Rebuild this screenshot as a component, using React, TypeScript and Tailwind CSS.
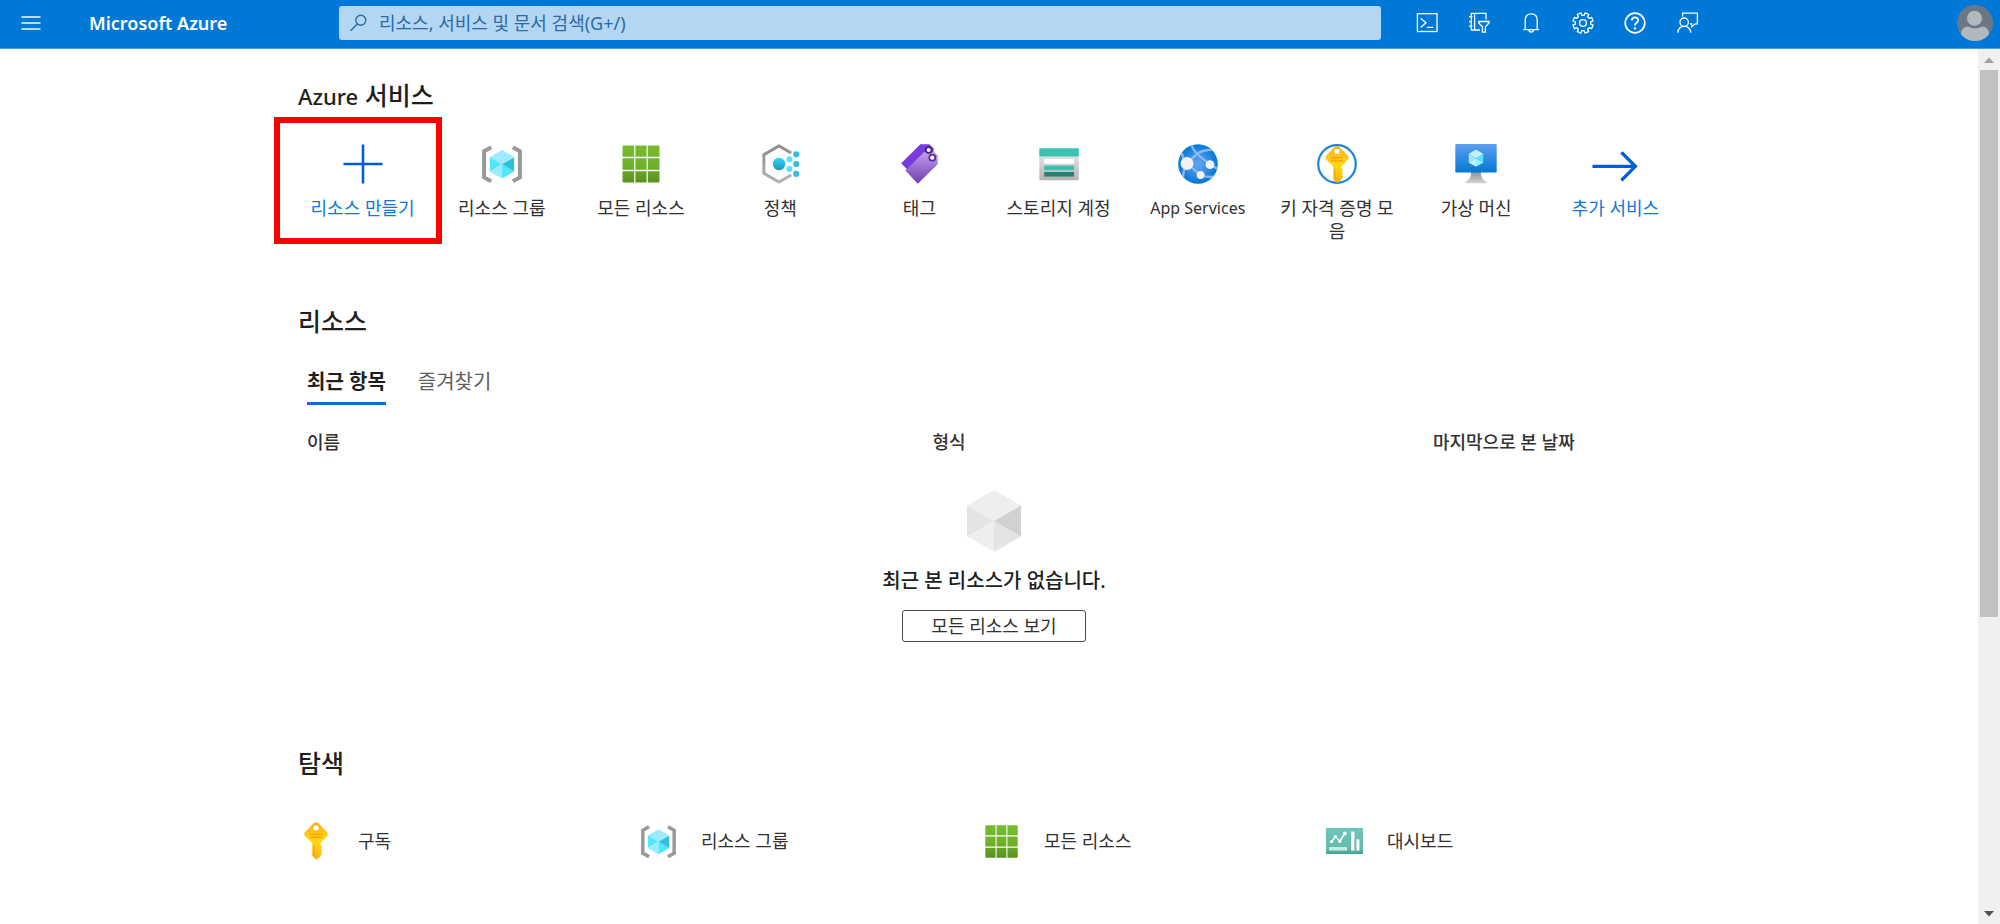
import type { ReactNode } from "react";

const CUBE_BLUE = ["#9cebff", "#50e6ff", "#9cebff", "#50e6ff", "#32bedd"];
const CUBE_GRAY = ["#eeeeee", "#e4e4e4", "#eeeeee", "#e4e4e4", "#d1d1d1"];

// faces: top, left, bottom left, bottom right, right
const CubeFaces = ({ colors }: { colors: string[] }) => (
	<>
		<path d="M27 0 54 15.5 27 31 0 15.5Z" fill={colors[0]} />
		<path d="M0 15.5 27 31 0 46.5Z" fill={colors[1]} />
		<path d="M0 46.5 27 31V62Z" fill={colors[2]} />
		<path d="M27 62V31L54 46.5Z" fill={colors[3]} />
		<path d="M54 46.5 27 31 54 15.5Z" fill={colors[4]} />
	</>
);

const KeyShape = ({ id }: { id: string }) => (
	<>
		<defs>
			<linearGradient id={id} x1="0" y1="0" x2="0" y2="1">
				<stop offset="0" stopColor="#feaa15" />
				<stop offset="0.3" stopColor="#ffc81a" />
				<stop offset="0.5" stopColor="#ffd70f" />
				<stop offset="1" stopColor="#feb014" />
			</linearGradient>
		</defs>
		<path
			d="M10.2.8Q12-.4 13.8.8L22.9 9.9Q24.7 12 23 14.2L16.6 20.8V23.4L18.2 25 16.8 26.6 18.2 28.2 16.8 29.8 18.2 31.4 16.6 33.2V34.2L12.4 37.8 8.2 34V21L1.1 14.2Q-.7 12 1.1 9.9Z"
			fill={`url(#${id})`}
		/>
		<path d="M10 24V34.5" stroke="#ff9300" strokeWidth="1.4" opacity="0.6" />
		<circle cx="12" cy="5.8" r="2.6" fill="#fff" />
		<path d="M6.4 12.3H17.6M6.4 15.2H17.6" stroke="#ff9300" strokeWidth="1.5" opacity="0.75" strokeLinecap="round" />
	</>
);

const PlusIcon = () => (
	<svg viewBox="0 0 40 40" className="h-10 w-10" aria-hidden="true">
		<path d="M20 .5V39.5M.5 20H39.5" stroke="#015cda" strokeWidth="2.6" />
	</svg>
);

const ResourceGroupIcon = ({ className }: { className: string }) => (
	<svg viewBox="0 0 40 40" className={className} aria-hidden="true">
		<path d="M9.2 3.2 2.1 7.2V33.4L9.2 37.3M30.8 3.2 37.9 7.2V33.4L30.8 37.3" fill="none" stroke="#999" strokeWidth="4" />
		<svg x="7.6" y="6" width="24.8" height="28.6" viewBox="0 0 54 62">
			<CubeFaces colors={CUBE_BLUE} />
		</svg>
	</svg>
);

const GridIcon = ({ id, className }: { id: string; className: string }) => (
	<svg viewBox="0 0 40 40" className={className} aria-hidden="true">
		<defs>
			<linearGradient id={id} gradientUnits="userSpaceOnUse" x1="0" y1="1.5" x2="0" y2="38.5">
				<stop offset="0" stopColor="#76bc2d" />
				<stop offset="0.55" stopColor="#6fb12a" />
				<stop offset="1" stopColor="#5a9020" />
			</linearGradient>
		</defs>
		<path
			d="M2.3 1.5H13.2V12.8H1.5V2.3ZM14.4 1.5H25.6V12.8H14.4ZM26.8 1.5H37.7L38.5 2.3V12.8H26.8ZM1.5 14.2H13.2V25.8H1.5ZM14.4 14.2H25.6V25.8H14.4ZM26.8 14.2H38.5V25.8H26.8ZM1.5 27.2H13.2V38.5H2.3L1.5 37.7ZM14.4 27.2H25.6V38.5H14.4ZM26.8 27.2H38.5V37.7L37.7 38.5H26.8Z"
			fill={`url(#${id})`}
		/>
	</svg>
);

const PolicyIcon = () => (
	<svg viewBox="0 0 40 40" className="h-10 w-10" aria-hidden="true">
		<defs>
			<linearGradient id="policy-dot" x1="0" y1="0" x2="0" y2="1">
				<stop offset="0" stopColor="#32d4f5" />
				<stop offset="1" stopColor="#1f95bf" />
			</linearGradient>
			<linearGradient id="policy-hex" x1="0" y1="0" x2="0" y2="1">
				<stop offset="0" stopColor="#8c8c8c" />
				<stop offset="1" stopColor="#b3b3b3" />
			</linearGradient>
		</defs>
		<path d="M31.2 9 19 2 3.9 10.6V29.4L19 38 31.2 31" fill="none" stroke="url(#policy-hex)" strokeWidth="3" />
		<circle cx="19" cy="20" r="6.2" fill="url(#policy-dot)" />
		<g fill="#50e6ff">
			<circle cx="29.4" cy="15.3" r="3" />
			<circle cx="29.4" cy="24.9" r="3" />
		</g>
		<g fill="#32bedd">
			<circle cx="36.3" cy="10.3" r="3.1" />
			<circle cx="36.3" cy="20" r="3.1" />
			<circle cx="36.3" cy="29.8" r="3.1" />
		</g>
	</svg>
);

const TagIcon = () => (
	<svg viewBox="0 0 40 40" className="h-10 w-10" aria-hidden="true">
		<defs>
			<linearGradient id="tag-front" x1="0" y1="0" x2="0" y2="1">
				<stop offset="0" stopColor="#c49dec" />
				<stop offset="1" stopColor="#6b3fb0" />
			</linearGradient>
		</defs>
		<path d="M2.2 19.3 21.4.3H30.4L34.6 4.5V10L8.5 25.8Z" fill="#773adc" />
		<path d="M6.3 26.6 25.2 8 34.6 7.6 38.6 11.6V20.2L18.8 39.8Z" fill="url(#tag-front)" />
		<circle cx="29.7" cy="6" r="2.9" fill="#fff" stroke="#3f1f80" strokeWidth="1.7" />
		<circle cx="33.3" cy="13.7" r="3" fill="#fff" stroke="#552f99" strokeWidth="1.7" />
	</svg>
);

const StorageIcon = () => (
	<svg viewBox="0 0 40 40" className="h-10 w-10" aria-hidden="true">
		<defs>
			<linearGradient id="storage-body" x1="0" y1="0" x2="0" y2="1">
				<stop offset="0" stopColor="#e0e0e0" />
				<stop offset="1" stopColor="#b3b3b3" />
			</linearGradient>
		</defs>
		<path d="M.3 12.5H39.8V35Q39.8 36.2 38.6 36.2H1.5Q.3 36.2 .3 35Z" fill="url(#storage-body)" />
		<path d="M1.3 4.3H38.8Q39.8 4.3 39.8 5.3V12.6H.3V5.3Q.3 4.3 1.3 4.3Z" fill="#37c2b1" />
		<rect x="5.2" y="15" width="29.8" height="4.8" fill="#fff" />
		<rect x="5.2" y="21.6" width="29.8" height="4.6" fill="#37c2b1" />
		<rect x="5.2" y="28" width="29.8" height="4.6" fill="#258277" />
	</svg>
);

const AppServicesIcon = () => (
	<svg viewBox="0 0 40 40" className="h-10 w-10" aria-hidden="true">
		<defs>
			<radialGradient id="app-globe">
				<stop offset="0.1" stopColor="#5ea0ef" />
				<stop offset="0.6" stopColor="#2f8ce2" />
				<stop offset="1" stopColor="#0078d4" />
			</radialGradient>
			<clipPath id="app-clip">
				<circle cx="20" cy="20" r="19.8" />
			</clipPath>
		</defs>
		<circle cx="20" cy="20" r="19.8" fill="url(#app-globe)" />
		<g clipPath="url(#app-clip)" fill="none" stroke="#86b9f5" strokeWidth="2.4">
			<path d="M13 0Q15 6 19 9.8L32 20.7M19 9.8Q26 5.5 35 5.8M19 9.8 9 19.3 22.5 31M9 19.3Q5 27 5 34M9 19.3Q4 14 4 9M22.5 31Q31 34.5 40 32M32 20.7Q37 24 40 24" />
		</g>
		<g fill="#f2f2f2">
			<circle cx="9" cy="19.5" r="6.5" />
			<circle cx="32" cy="20.7" r="4.4" />
			<circle cx="22.6" cy="31" r="3.9" />
		</g>
	</svg>
);

const KeyVaultIcon = () => (
	<svg viewBox="0 0 40 40" className="h-10 w-10" aria-hidden="true">
		<circle cx="20" cy="20" r="18.8" fill="#fff" stroke="#1b85dc" strokeWidth="2.2" />
		<svg x="8" y="1.6" width="24" height="37.6" viewBox="0 0 24 38">
			<KeyShape id="vault-key" />
		</svg>
	</svg>
);

const VirtualMachineIcon = () => (
	<svg viewBox="0 0 42 40" className="h-10 w-[42px]" aria-hidden="true">
		<defs>
			<linearGradient id="vm-screen" x1="0" y1="0" x2="0" y2="1">
				<stop offset="0" stopColor="#5ea0ef" />
				<stop offset="1" stopColor="#0078d4" />
			</linearGradient>
			<linearGradient id="vm-stand" x1="0" y1="0" x2="0" y2="1">
				<stop offset="0" stopColor="#8a8a8a" />
				<stop offset="1" stopColor="#d4d4d4" />
			</linearGradient>
		</defs>
		<path d="M16.2 27H25.8Q25.6 36 31.2 37.4V39.2H10.8V37.4Q16.4 36 16.2 27Z" fill="url(#vm-stand)" />
		<rect x="0.3" y="0" width="41.4" height="28.6" rx="1.2" fill="url(#vm-screen)" />
		<svg x="13.5" y="5.6" width="15" height="17.2" viewBox="0 0 54 62">
			<CubeFaces colors={["#c3f1ff", "#9cebff", "#c3f1ff", "#9cebff", "#50e6ff"]} />
		</svg>
	</svg>
);

const ArrowIcon = () => (
	<svg viewBox="0 0 46 40" className="h-10 w-[46px]" aria-hidden="true">
		<path d="M.5 22.3H43.5M29.4 8.3 43.4 22.3 29.4 36.3" fill="none" stroke="#015cda" strokeWidth="3.3" />
	</svg>
);

const DashboardIcon = () => (
	<svg viewBox="0 0 37 26" className="h-[26px] w-[37px]" aria-hidden="true">
		<defs>
			<linearGradient id="dash-bg" x1="0" y1="0" x2="0" y2="1">
				<stop offset="0" stopColor="#6bc7b8" />
				<stop offset="0.8" stopColor="#62bbad" />
				<stop offset="1" stopColor="#45a092" />
			</linearGradient>
		</defs>
		<rect width="37" height="26" rx="0.8" fill="url(#dash-bg)" />
		<path d="M5.6 13.6 9.5 8.6 13.8 13.2 18.8 5.6" fill="none" stroke="#fff" strokeWidth="1.5" />
		<g fill="#fff">
			<circle cx="5.6" cy="13.6" r="1.7" />
			<circle cx="9.5" cy="8.6" r="1.7" />
			<circle cx="13.8" cy="13.2" r="1.7" />
			<circle cx="18.8" cy="5.4" r="1.9" />
			<rect x="25.2" y="3.6" width="3.2" height="19" />
			<rect x="30.4" y="11.3" width="3" height="11.3" />
		</g>
		<rect x="3" y="19" width="18" height="3.6" fill="#c4ebe5" />
	</svg>
);

const HeaderIcon = ({ children }: { children: ReactNode }) => (
	<svg viewBox="0 0 24 24" className="h-6 w-6" fill="none" stroke="#fff" strokeWidth="1.3" aria-hidden="true">
		{children}
	</svg>
);

// Eight-tooth gear outline centred on 12,12
const gearPath = (() => {
	const points: string[] = [];
	for (let tooth = 0; tooth < 8; tooth++) {
		const mid = tooth * 45 - 67.5;
		for (const [offset, radius] of [
			[-14, 7.8],
			[-11, 10.3],
			[11, 10.3],
			[14, 7.8],
		]) {
			const angle = ((mid + offset) * Math.PI) / 180;
			points.push(`${(12 + radius * Math.cos(angle)).toFixed(2)} ${(12 + radius * Math.sin(angle)).toFixed(2)}`);
		}
	}
	return `M${points.join("L")}Z`;
})();

const headerActions = [
	{
		label: "Cloud Shell",
		icon: (
			<>
				<rect x="2.4" y="2.7" width="19.6" height="17.8" />
				<path d="M5.6 7.2 11 11.8 5.6 16.4M12 16.4H18.2" />
			</>
		),
	},
	{
		label: "디렉터리 + 구독",
		icon: (
			<>
				<path d="M13 19H4.3V2.3H19V8.4M7.6 2.3V19M2 5.6H5.5M2 10.6H4.3M2 15.2H5.5" />
				<path d="M11.8 10.5H22V12L18.4 15.8V21.2H15.4V15.8L11.8 12Z" />
			</>
		),
	},
	{
		label: "알림",
		icon: (
			<>
				<path d="M6.2 18.6V9.2Q6.2 2.9 12.2 2.9 18.2 2.9 18.2 9.2V18.6M4.4 18.6H20" />
				<path d="M10 18.8Q10 21.2 12.2 21.2 14.4 21.2 14.4 18.8" />
			</>
		),
	},
	{
		label: "설정",
		icon: (
			<>
				<path d={gearPath} strokeLinejoin="round" />
				<circle cx="12" cy="12" r="3.4" />
			</>
		),
	},
	{
		label: "도움말",
		icon: (
			<>
				<circle cx="12" cy="12" r="9.8" strokeWidth="1.7" />
				<path d="M8.8 9.4Q8.9 6.4 12 6.4 15.2 6.4 15.2 9.2 15.2 10.6 13.6 11.7 12 12.8 12 14.6" strokeWidth="1.8" />
				<circle cx="12" cy="17.4" r="1.2" fill="#fff" stroke="none" />
			</>
		),
	},
	{
		label: "피드백",
		icon: (
			<>
				<circle cx="9.2" cy="11.2" r="4.2" />
				<path d="M2.8 21.6Q3.4 15.4 9.2 15.4T15.8 21.6M7.6 5.6V2.2H22.4V12.8H20.4L16.8 15.6V12.8H15" />
			</>
		),
	},
];

const services = [
	{ name: "리소스 만들기", icon: <PlusIcon />, accent: true, highlighted: true },
	{ name: "리소스 그룹", icon: <ResourceGroupIcon className="h-10 w-10" /> },
	{ name: "모든 리소스", icon: <GridIcon id="grid-service" className="h-10 w-10" /> },
	{ name: "정책", icon: <PolicyIcon /> },
	{ name: "태그", icon: <TagIcon /> },
	{ name: "스토리지 계정", icon: <StorageIcon /> },
	{ name: "App Services", icon: <AppServicesIcon />, latin: true },
	{ name: "키 자격 증명 모음", icon: <KeyVaultIcon /> },
	{ name: "가상 머신", icon: <VirtualMachineIcon /> },
	{ name: "추가 서비스", icon: <ArrowIcon />, accent: true },
];

const navigateLinks = [
	{
		name: "구독",
		icon: (
			<svg viewBox="0 0 24 38" className="h-[38px] w-6" aria-hidden="true">
				<KeyShape id="subscription-key" />
			</svg>
		),
	},
	{ name: "리소스 그룹", icon: <ResourceGroupIcon className="h-[35px] w-[35px]" /> },
	{ name: "모든 리소스", icon: <GridIcon id="grid-navigate" className="h-[35px] w-[35px]" /> },
	{ name: "대시보드", icon: <DashboardIcon /> },
];

const Header = () => (
	<header className="flex h-[49px] shrink-0 items-center border-b border-[#4a9ee3] bg-[#0078d7] pb-[2px] text-white">
		<button type="button" aria-label="메뉴" className="ml-[19px] flex h-6 w-6 items-center justify-center">
			<svg viewBox="0 0 20 16" className="h-4 w-5" aria-hidden="true">
				<path d="M.5 2H19.5M.5 8H19.5M.5 14H19.5" stroke="#b8daf5" strokeWidth="1.8" />
			</svg>
		</button>
		<a href="#" className="ml-[46px] w-[250px] shrink-0 text-lg font-semibold">
			Microsoft Azure
		</a>
		<label className="flex h-[34px] min-w-0 max-w-[1042px] flex-1 items-center rounded-[3px] bg-[#b3d6f2] pl-[10px]">
			<svg viewBox="0 0 20 20" className="h-5 w-5 shrink-0" aria-hidden="true">
				<circle cx="11.8" cy="7.2" r="5" fill="none" stroke="#2b6ba6" strokeWidth="1.4" />
				<path d="M8.4 11 1.5 17.8" stroke="#2b6ba6" strokeWidth="1.4" />
			</svg>
			<input
				type="text"
				aria-label="검색"
				placeholder="리소스, 서비스 및 문서 검색(G+/)"
				className="ml-[10px] h-full min-w-0 flex-1 bg-transparent text-lg outline-none placeholder:text-[#2b6ba6]"
			/>
		</label>
		<div className="ml-[34px] flex gap-7">
			{headerActions.map((action) => (
				<button key={action.label} type="button" aria-label={action.label}>
					<HeaderIcon>{action.icon}</HeaderIcon>
				</button>
			))}
		</div>
		<button type="button" aria-label="계정" className="ml-auto mr-[7px]">
			<svg viewBox="0 0 36 36" className="h-9 w-9" aria-hidden="true">
				<clipPath id="avatar-clip">
					<circle cx="18" cy="18" r="18" />
				</clipPath>
				<g clipPath="url(#avatar-clip)">
					<rect width="36" height="36" fill="#6b7785" />
					<path d="M4 36V29Q4.500 21.500 11 21.500 18 25.500 25 21.500 31.500 21.500 32 29V36Z" fill="#b2b8bd" />
					<circle cx="17.500" cy="13.300" r="8" fill="#b2b8bd" stroke="#6b7785" strokeWidth="1" />
				</g>
			</svg>
		</button>
	</header>
);

const ScrollBar = () => (
	<div className="flex w-[22px] shrink-0 flex-col items-center bg-[#f0f0f0]" aria-hidden="true">
		<svg viewBox="0 0 22 21" className="h-[21px] w-[22px]">
			<path d="M6 14 11 8.500 16 14Z" fill="#a0a0a0" />
		</svg>
		<div className="flex w-[18px] flex-1 flex-col">
			<div className="grow-[547] bg-[#c1c1c1]"></div>
			<div className="grow-[286]"></div>
		</div>
		<svg viewBox="0 0 22 21" className="h-[21px] w-[22px]">
			<path d="M6 8 11 13.500 16 8Z" fill="#505050" />
		</svg>
	</div>
);

const App = () => {
	return (
		<div className="flex h-screen flex-col overflow-hidden bg-white font-['Noto_Sans','Noto_Sans_CJK_KR',sans-serif] text-[#323130]">
			<Header />
			<div className="flex min-h-0 flex-1">
				<main className="min-w-0 flex-1 overflow-hidden">
					<div className="mx-auto w-full max-w-[1392px] pt-[30px]">
						<section>
							<h2 className="pl-[5px] text-[25px] font-medium leading-8 text-[#201f1e]">
								<span className="text-[22px]">Azure</span> 서비스
							</h2>
							<ul className="mt-8 grid grid-cols-10">
								{services.map((service) => (
									<li key={service.name} className="relative">
										<a
											href="#"
											className={`flex flex-col items-center gap-[13px] px-2 text-center leading-[23px] ${service.latin ? "text-[16px]" : "text-[18px]"} ${service.accent ? "text-[#0f7ad8]" : ""}`}
										>
											{service.icon}
											<span>{service.name}</span>
										</a>
										{service.highlighted && (
											<div className="pointer-events-none absolute -left-[19px] -right-[10px] -top-[27px] h-[127px] border-[6px] border-[#ff0000]"></div>
										)}
									</li>
								))}
							</ul>
						</section>

						<section className="mt-[62px]">
							<h2 className="pl-[5px] text-[25px] font-medium leading-8 text-[#201f1e]">리소스</h2>
							<div className="pl-[10px]">
								<div role="tablist" className="mt-[33px] flex gap-8 pl-1 text-xl leading-6">
									<button type="button" role="tab" aria-selected="true" className="border-b-[3px] border-[#0f6fd1] pb-2 font-semibold text-[#201f1e]">
										최근 항목
									</button>
									<button type="button" role="tab" aria-selected="false" className="border-b-[3px] border-transparent pb-2 text-[#605e5c]">
										즐겨찾기
									</button>
								</div>
								<div className="-mr-2 mt-[25px]">
									<table className="w-full table-fixed text-left text-lg leading-6">
										<thead>
											<tr>
												<th className="w-[45%] pl-1 font-medium">이름</th>
												<th className="w-[36%] pl-1 font-medium">형식</th>
												<th className="pl-1 font-medium">마지막으로 본 날짜</th>
											</tr>
										</thead>
									</table>
								</div>
								<div className="mt-9 flex flex-col items-center">
									<svg viewBox="0 0 54 62" className="h-[62px] w-[54px]" aria-hidden="true">
										<CubeFaces colors={CUBE_GRAY} />
									</svg>
									<p className="mt-[17px] text-xl font-medium leading-6 text-[#201f1e]">최근 본 리소스가 없습니다.</p>
									<button type="button" className="mt-[17px] h-8 rounded-[3px] border border-[#4a4a4a] px-7 text-lg leading-6">
										모든 리소스 보기
									</button>
								</div>
							</div>
						</section>

						<section className="mt-[105px]">
							<h2 className="pl-[5px] text-[25px] font-medium leading-8 text-[#201f1e]">탐색</h2>
							<ul className="mt-[42px] grid grid-cols-4 pl-1 pr-4">
								{navigateLinks.map((link) => (
									<li key={link.name}>
										<a href="#" className="flex h-10 items-center gap-6 text-lg">
											<span className="flex w-[37px] justify-center">{link.icon}</span>
											{link.name}
										</a>
									</li>
								))}
							</ul>
						</section>
					</div>
				</main>
				<ScrollBar />
			</div>
		</div>
	);
};

export default App;
